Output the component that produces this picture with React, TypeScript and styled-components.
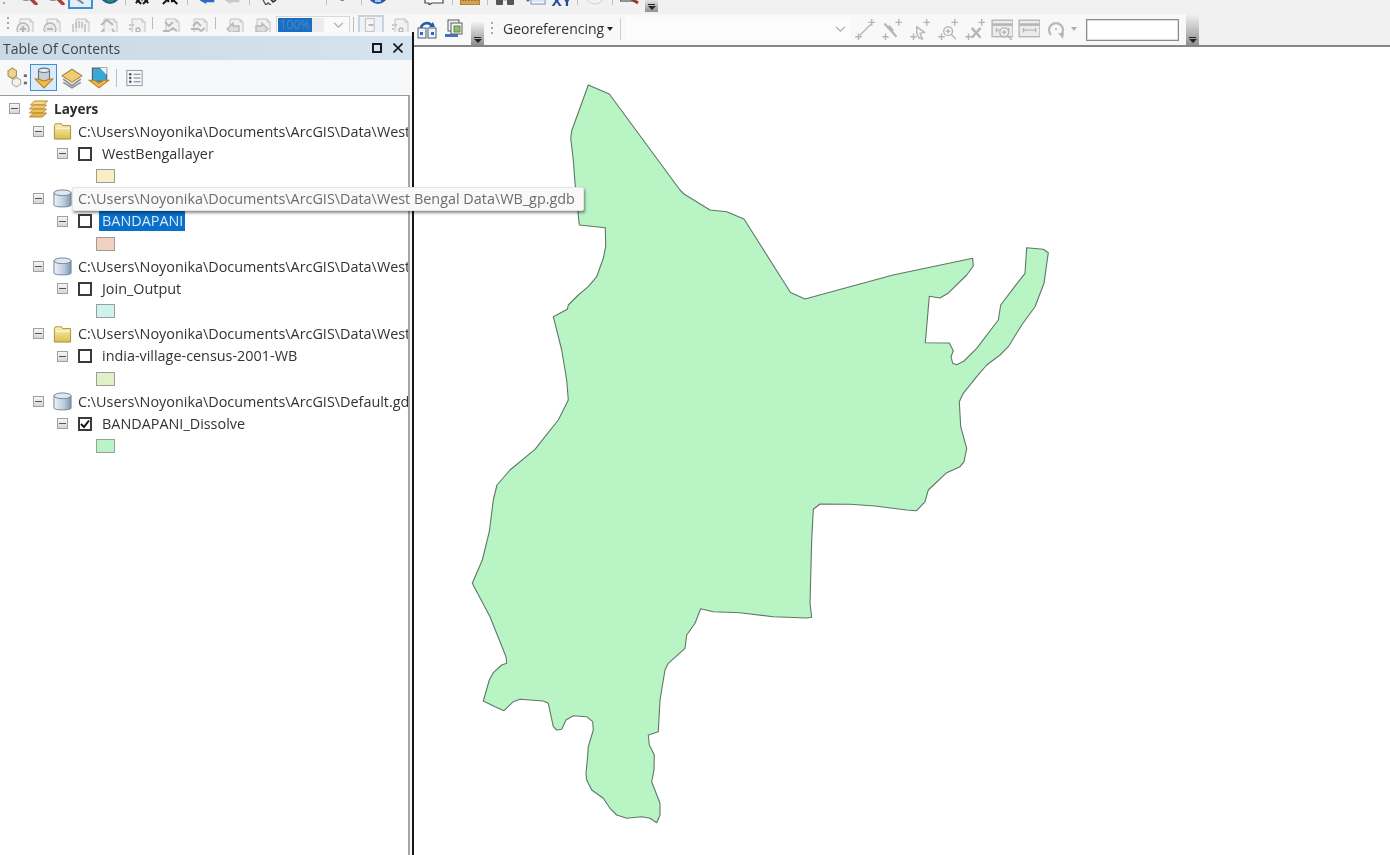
import React from 'react';
import styled, { createGlobalStyle } from 'styled-components';

const GlobalStyle = createGlobalStyle`
  html, body { margin: 0; padding: 0; background: #fff; }
  body { font-family: "Open Sans", "Noto Sans", sans-serif; }
`;

const Page = styled.div`
  position: relative;
  width: 1390px;
  height: 855px;
  overflow: hidden;
  display: flex;
  flex-direction: column;
  background: #fff;
  filter: blur(0.5px);
`;

const TopStrip = styled.div`
  height: 14px;
  flex: none;
  background: #f1f1f1;
  display: flex;
  align-items: flex-end;
  padding-bottom: 9px;
  box-sizing: border-box;
  overflow: hidden;
`;

const Slot = styled.div<{ $w: number; $after?: number; $drop?: number; $before?: number }>`
  width: ${p => p.$w}px;
  margin-left: ${p => p.$before ?? 0}px;
  margin-right: ${p => p.$after ?? 0}px;
  margin-bottom: ${p => -(p.$drop ?? 0)}px;
  flex: none;
  display: flex;
  justify-content: center;
  align-items: flex-end;
`;

const HandleSlot = styled(Slot)`
  align-self: flex-end;
`;

const Ico = styled.svg.attrs({ viewBox: '0 0 20 20' })<{ $w?: number; $h?: number }>`
  width: ${p => p.$w ?? 20}px;
  height: ${p => p.$h ?? 20}px;
  flex: none;
  display: block;
`;

const ActiveTool = styled.div`
  width: 25px;
  height: 24px;
  box-sizing: border-box;
  border: 2px solid #3f8fd8;
  background: #e2eefa;
  display: flex;
  align-items: flex-end;
  justify-content: center;
`;

const Sep = styled.div<{ $h?: number; $c?: string }>`
  width: 1px;
  height: ${p => p.$h ?? 20}px;
  background: ${p => p.$c ?? '#bdbdbd'};
  flex: none;
`;

const Handle = styled.div<{ $h: number }>`
  width: 13px;
  height: ${p => p.$h}px;
  flex: none;
  background: linear-gradient(#f2f2f2, #c6c6c6 45%, #8f8f8f);
  display: flex;
  flex-direction: column;
  align-items: center;
  justify-content: flex-end;
  padding-bottom: 2px;
  box-sizing: border-box;
  gap: 1px;
`;
const HandleBar = styled.div`
  width: 7px;
  height: 1px;
  background: #222;
`;
const HandleArrow = styled.div`
  width: 0;
  height: 0;
  border-left: 4px solid transparent;
  border-right: 4px solid transparent;
  border-top: 4px solid #222;
`;

const Grip = styled.div<{ $h?: number }>`
  width: 2px;
  height: ${p => p.$h ?? 14}px;
  flex: none;
  background: repeating-linear-gradient(#a9a9a9 0 2px, transparent 2px 5px);
`;

const Workspace = styled.div`
  flex: 1;
  min-height: 0;
  display: flex;
`;

const LeftColumn = styled.div`
  width: 414px;
  flex: none;
  display: flex;
  flex-direction: column;
  background: #f6f6f6;
`;

const ToolClip = styled.div`
  height: 18px;
  flex: none;
  overflow: hidden;
  display: flex;
  align-items: flex-start;
  padding: 3px 0 0 7px;
  box-sizing: border-box;
  background: #f7f7f7;
`;

const ZoomCombo = styled.div`
  width: 74px;
  height: 18px;
  flex: none;
  box-sizing: border-box;
  border: 1px solid #d8d8d8;
  background: #fafafa;
  display: flex;
  align-items: center;
  padding: 1px;
  margin: -1px 3px 0 0;
`;
const ZoomValue = styled.div`
  width: 34px;
  height: 14px;
  background: #1a6fc4;
  color: #4a88c4;
  font-size: 12px;
  line-height: 14px;
  text-align: center;
`;
const ZoomRest = styled.div`
  width: 12px;
  height: 14px;
  background: #ececec;
`;
const Chevron = styled.svg.attrs({ viewBox: '0 0 12 8' })`
  width: 11px;
  height: 7px;
  margin-left: auto;
  margin-right: 4px;
  flex: none;
`;
const LayoutToggle = styled.div`
  width: 26px;
  height: 20px;
  flex: none;
  box-sizing: border-box;
  border: 2px solid #c6d3e2;
  background: #eef1f5;
  display: flex;
  align-items: flex-start;
  justify-content: center;
  margin: -2px 0 0 0;
`;

const Panel = styled.div`
  flex: 1;
  min-height: 0;
  display: flex;
  flex-direction: column;
  border-right: 2px solid #151515;
  background: #f7f8fa;
`;
const TitleBar = styled.div`
  height: 24px;
  flex: none;
  margin-top: 4px;
  background: linear-gradient(90deg, #cbd8e6, #d5e2f0);
  display: flex;
  align-items: center;
  padding: 0 9px 0 3px;
  color: #3b444e;
  font-size: 14px;
`;
const TitleText = styled.span`
  flex: 1;
`;
const TitleButtons = styled.div`
  display: flex;
  gap: 11px;
  align-items: center;
`;
const MaxBox = styled.div`
  width: 10px;
  height: 10px;
  border: 2px solid #1a1a1a;
  box-sizing: border-box;
`;
const PanelTools = styled.div`
  height: 35px;
  flex: none;
  display: flex;
  align-items: center;
  padding-left: 7px;
  box-sizing: border-box;
`;
const ToolPress = styled.div`
  width: 27px;
  height: 27px;
  box-sizing: border-box;
  border: 1px solid #3f8fd8;
  background: #dcebf9;
  display: flex;
  align-items: center;
  justify-content: center;
  flex: none;
`;

const Tree = styled.div`
  flex: 1;
  min-height: 0;
  width: 410px;
  box-sizing: border-box;
  background: #fff;
  border-top: 1px solid #9c9c9c;
  border-right: 2px solid #a6a6a6;
  padding-top: 1.5px;
  overflow: hidden;
  color: #333;
  font-size: 14.4px;
`;
const Row = styled.div<{ $indent: number }>`
  height: 22.5px;
  display: flex;
  align-items: center;
  white-space: nowrap;
  padding-left: ${p => p.$indent}px;
`;
const Expander = styled.div`
  width: 11px;
  height: 11px;
  flex: none;
  box-sizing: border-box;
  border: 1px solid #a0a0a0;
  background: linear-gradient(#f6f6f6, #d6d6d6);
  display: flex;
  align-items: center;
  justify-content: center;
  &::after {
    content: '';
    width: 7px;
    height: 1px;
    background: #555;
  }
`;
const NodeIcon = styled.div`
  width: 20px;
  flex: none;
  margin-left: 8px;
  display: flex;
  justify-content: center;
`;
const PathLabel = styled.span`
  margin-left: 6px;
`;
const RootLabel = styled.span`
  margin-left: 6px;
  font-weight: 700;
  color: #2b2b2b;
  font-size: 13.5px;
`;
const Check = styled.div`
  width: 14px;
  height: 14px;
  flex: none;
  margin-left: 10px;
  box-sizing: border-box;
  border: 2px solid #3a3a3a;
  background: #fff;
  display: flex;
  align-items: center;
  justify-content: center;
`;
const LayerLabel = styled.span<{ $selected?: boolean }>`
  margin-left: 7px;
  padding: 0 2px 0 3px;
  line-height: 20px;
  background: ${p => (p.$selected ? '#0a6fc9' : 'transparent')};
  color: ${p => (p.$selected ? '#d8eafa' : 'inherit')};
`;
const Swatch = styled.div<{ $c: string }>`
  width: 19px;
  height: 14px;
  box-sizing: border-box;
  border: 1px solid #9d9d9d;
  background: ${p => p.$c};
  flex: none;
`;

const RightColumn = styled.div`
  flex: 1;
  min-width: 0;
  display: flex;
  flex-direction: column;
`;
const GeoBar = styled.div`
  height: 33px;
  flex: none;
  background: #f1f1f1;
  border-bottom: 2px solid #868686;
  box-sizing: border-box;
  display: flex;
  align-items: flex-end;
`;
const GeoInner = styled.div`
  height: 31px;
  flex: none;
  box-sizing: border-box;
  background: #f8f8f8;
  display: flex;
  align-items: center;
  padding: 0 0 2px 3px;
`;
const MenuLabel = styled.span`
  color: #333;
  font-size: 14px;
  margin: 0 3px 0 10px;
  flex: none;
`;
const MenuCaret = styled.div`
  width: 0;
  height: 0;
  border-left: 3px solid transparent;
  border-right: 3px solid transparent;
  border-top: 4px solid #222;
  flex: none;
  margin-right: 7px;
`;
const GeoCombo = styled.div`
  width: 224px;
  height: 24px;
  flex: none;
  box-sizing: border-box;
  background: #fcfcfc;
  display: flex;
  align-items: center;
  margin: 1px 3px 0 5px;
`;
const ScaleCaret = styled.div`
  width: 0;
  height: 0;
  border-left: 3px solid transparent;
  border-right: 3px solid transparent;
  border-top: 4px solid #aaa;
  flex: none;
  margin: 0 9px 0 5px;
`;
const ScaleInput = styled.div`
  width: 93px;
  height: 22px;
  flex: none;
  box-sizing: border-box;
  border: 1px solid #8a8a8a;
  box-shadow: inset 0 0 0 0.5px #bbb;
  background: #fff;
  margin: 3px 7px 0 0;
`;

const MapView = styled.div`
  flex: 1;
  min-height: 0;
  background: #fff;
`;
const MapSvg = styled.svg`
  display: block;
  width: 976px;
  height: 808px;
`;

const Tooltip = styled.div`
  position: absolute;
  left: 72px;
  top: 187px;
  width: 512px;
  height: 24px;
  box-sizing: border-box;
  padding-left: 5px;
  background: #f9f9f9;
  border: 1px solid #e4e4e4;
  box-shadow: 1px 2px 3px rgba(0, 0, 0, 0.45);
  border-radius: 2px;
  color: #6c6c6c;
  font-size: 14.4px;
  line-height: 21px;
  white-space: nowrap;
`;

/* ---------- icons ---------- */
const Magnifier = () => (
  <Ico>
    <circle cx="8" cy="8" r="7" fill="#eee" stroke="#8a8a8a" strokeWidth="2" />
    <path d="M13 14l5 5" stroke="#a8423a" strokeWidth="3.4" strokeLinecap="round" />
  </Ico>
);
const Globe = () => (
  <Ico>
    <circle cx="10" cy="9" r="10" fill="#1b5f9e" />
    <path d="M5 13c3-2 7-2 10 0l-2 4H8z" fill="#2f8b55" />
  </Ico>
);
const BlackIn = ({ flip }: { flip?: boolean }) => (
  <Ico $w={18} $h={20}>
    <path d={flip ? 'M1 20l6-6M3 14h4v4M17 20l-6-6M11 18v-4h4' : 'M2 14l6 6M2 19l5-5M16 14l-6 6M11 14l5 5'} stroke="#161616" strokeWidth="2.2" fill="none" />
    <path d={flip ? 'M7 13h4v1H7z' : 'M8 16h2v1H8z'} fill="#161616" />
  </Ico>
);
const BlueArrow = ({ faded }: { faded?: boolean }) => (
  <Ico $w={18} $h={20}>
    <path d="M1 16l7-7v5h9v4H8v2z" fill={faded ? '#c9c9c9' : '#2a6cc0'} />
  </Ico>
);
const CursorDoc = () => (
  <Ico>
    <path d="M3 12h8l4 5 3-2" stroke="#333" strokeWidth="1.6" fill="none" />
    <path d="M5 15l3 5 2-2 3 2" stroke="#555" strokeWidth="1.4" fill="#fff" />
  </Ico>
);
const FaintBar = () => (
  <Ico $w={14} $h={20}>
    <path d="M0 15.5h14" stroke="#c6c6c6" strokeWidth="1.4" />
  </Ico>
);
const BlackPointer = () => (
  <Ico $w={11} $h={20}>
    <path d="M1 8l9 8-3 1 2 3H3z" fill="#111" />
  </Ico>
);
const InfoDisc = () => (
  <Ico>
    <circle cx="10" cy="9" r="10" fill="#1e5fb4" />
    <path d="M7 16h6" stroke="#cfe2f7" strokeWidth="1.6" />
  </Ico>
);
const FaintSlash = () => (
  <Ico $w={9} $h={20}>
    <path d="M8 13l-6 7" stroke="#cfcfcf" strokeWidth="1.6" />
  </Ico>
);
const Bubble = () => (
  <Ico>
    <path d="M1 10h18v8H8l-3 2v-2H1z" fill="#fafafa" stroke="#444" strokeWidth="1.2" />
  </Ico>
);
const Ruler = () => (
  <Ico>
    <rect x="0" y="12" width="20" height="8" fill="#d3a24a" stroke="#8a6a2a" />
    <path d="M3 12v4M6 12v4M9 12v4M12 12v4M15 12v4M18 12v4" stroke="#6d5120" />
  </Ico>
);
const Binoculars = () => (
  <Ico>
    <rect x="1" y="13" width="7" height="7" rx="1" fill="#555" />
    <rect x="12" y="13" width="7" height="7" rx="1" fill="#555" />
    <rect x="8.5" y="14" width="3" height="1.4" fill="#777" />
  </Ico>
);
const TableXY = () => (
  <Ico $w={22}>
    <rect x="6" y="12" width="14" height="7" fill="#fff" stroke="#6f8eb4" />
    <circle cx="3" cy="15" r="1.6" fill="#2a6cc0" />
    <path d="M6 16h14" stroke="#b9c9dc" />
  </Ico>
);
const XYLabel = styled.span`
  font-size: 15px;
  line-height: 20px;
  font-weight: 700;
  color: #1f4f9c;
  height: 20px;
  letter-spacing: 0.5px;
  margin-bottom: -5px;
`;
const FaintDish = () => (
  <Ico>
    <ellipse cx="10" cy="11" rx="9" ry="8" fill="#f2f2f2" stroke="#cfcfcf" />
  </Ico>
);
const RedTool = () => (
  <Ico>
    <path d="M0 12h14v4H0z" fill="#f5f5f5" stroke="#333" />
    <path d="M10 13l8 5" stroke="#9a3a2a" strokeWidth="3" />
  </Ico>
);

const FadedPage = ({ children }: { children?: React.ReactNode }) => (
  <Ico>
    <path d="M5 2h10l3 3v15H5z" fill="#f1f1f1" stroke="#c2c2c2" />
    <path d="M15 2v3h3" fill="none" stroke="#c2c2c2" />
    {children}
  </Ico>
);
const G = styled.g`
  fill: none;
  stroke: #b6b6b6;
  stroke-width: 1.3;
`;
const PageZoomIn = () => (
  <FadedPage>
    <G>
      <circle cx="8" cy="12" r="6" fill="#e9e9e9" />
      <path d="M5 12h6M8 9v6" strokeWidth="2" />
    </G>
  </FadedPage>
);
const PageZoomOut = () => (
  <FadedPage>
    <G>
      <circle cx="8" cy="12" r="6" fill="#e9e9e9" />
      <path d="M5 12h6" strokeWidth="2" />
    </G>
  </FadedPage>
);
const PageHand = () => (
  <FadedPage>
    <G>
      <path d="M2 12V7M5 11V5M8 11V4M11 11V5M14 12V7M2 12c0 5 3 7 7 7s5-3 5-7" />
    </G>
  </FadedPage>
);
const PageArrows = () => (
  <FadedPage>
    <G>
      <path d="M2 8l6-5 6 5M5 12l-3 4h6M13 12l3 4h-6" strokeWidth="1.8" />
    </G>
  </FadedPage>
);
const PageDashed = () => (
  <FadedPage>
    <G>
      <path d="M2 8h5M2 12h3M2 16h3" strokeDasharray="2 1" />
      <circle cx="11" cy="13" r="2" />
    </G>
  </FadedPage>
);
const PageIn = () => (
  <FadedPage>
    <G>
      <path d="M4 5l4 4 4-4M8 14l4-3 4 3M2 14h6" strokeWidth="1.8" />
    </G>
  </FadedPage>
);
const PageOut = () => (
  <FadedPage>
    <G>
      <path d="M4 9l4-4 4 4M8 11l4 3 4-3M2 12h6" strokeWidth="1.8" />
    </G>
  </FadedPage>
);
const PageBack = () => (
  <FadedPage>
    <G>
      <path d="M2 12l6-6v3h6v6H8v3z" fill="#dcdcdc" />
    </G>
  </FadedPage>
);
const PageForward = () => (
  <FadedPage>
    <G>
      <path d="M16 12l-6-6v3H4v6h6v3z" fill="#dcdcdc" />
    </G>
  </FadedPage>
);

const RefreshDocs = () => (
  <Ico>
    <path d="M4 9a6 6 0 0 1 11-2" fill="none" stroke="#1f5fa8" strokeWidth="2.6" />
    <path d="M12 8h6l-2-5z" fill="#1f5fa8" />
    <rect x="1" y="9" width="8" height="10" fill="#eef3f8" stroke="#4d5f73" />
    <rect x="11" y="9" width="8" height="10" fill="#eef3f8" stroke="#4d5f73" />
    <rect x="3" y="13" width="3" height="3" fill="#2a6cc0" />
    <rect x="14" y="13" width="3" height="3" fill="#2a6cc0" />
  </Ico>
);
const DataFrames = () => (
  <Ico>
    <rect x="4" y="1" width="11" height="11" fill="#f2f2f2" stroke="#5c5c5c" />
    <rect x="7" y="4" width="11" height="11" fill="#f7f7f7" stroke="#5c5c5c" />
    <rect x="10" y="7" width="6" height="6" fill="#8cc06a" stroke="#5f8a45" />
    <rect x="1" y="15" width="13" height="3" fill="#3f72b8" />
  </Ico>
);

const GeoPlus = ({ children }: { children?: React.ReactNode }) => (
  <Ico $w={22} $h={22}>
    <G>
      <path d="M2 17h6M5 14v6M14 4h6M17 1v6" />
      {children}
    </G>
  </Ico>
);
const GeoTable = ({ lens }: { lens?: boolean }) => (
  <Ico $w={22} $h={22}>
    <G>
      <rect x="1" y="2" width="19" height="15" fill="#ececec" />
      <path d="M1 6h19" strokeWidth="2.4" />
      <path d="M5 11h11M5 9v4M16 9v4" />
      {lens && <circle cx="12" cy="13" r="4" fill="#f2f2f2" />}
      {lens && <path d="M15 16l4 4M10 13h4M12 11v4" />}
    </G>
  </Ico>
);
const GeoRotate = () => (
  <Ico $w={20} $h={22}>
    <path d="M5 16a7 7 0 1 1 10 0" fill="none" stroke="#b8b8b8" strokeWidth="2.2" />
    <path d="M12 14l6 0 -1 6z" fill="#b8b8b8" />
    <circle cx="10" cy="10" r="1" fill="#a8a8a8" />
  </Ico>
);

const LayersIcon = () => (
  <Ico $w={21} $h={20}>
    <path d="M6 2h13l-4 4H2z" fill="#f3d98f" stroke="#b98a2e" />
    <path d="M5 6h13l-4 4H1z" fill="#efcb74" stroke="#b98a2e" />
    <path d="M5 10h13l-4 4H1z" fill="#ecc260" stroke="#b98a2e" />
    <path d="M5 14h13l-4 4H1z" fill="#e6b64e" stroke="#b98a2e" />
  </Ico>
);
const FolderIcon = () => (
  <Ico $w={19} $h={18}>
    <defs>
      <linearGradient id="folderFill" x1="0" y1="0" x2="0" y2="1">
        <stop offset="0" stopColor="#fdf3b8" />
        <stop offset="1" stopColor="#d9bd50" />
      </linearGradient>
    </defs>
    <path d="M1 4l1-2h7l1 2h9v15H1z" fill="url(#folderFill)" stroke="#a08a30" />
    <path d="M2 7h16" stroke="#fff8d8" />
  </Ico>
);
const CylinderIcon = () => (
  <Ico $w={19} $h={19}>
    <defs>
      <linearGradient id="cylFill" x1="0" y1="0" x2="1" y2="0">
        <stop offset="0" stopColor="#eef3f8" />
        <stop offset="0.6" stopColor="#b9cbdd" />
        <stop offset="1" stopColor="#7f95ac" />
      </linearGradient>
    </defs>
    <path d="M1 4v13c0 2.500 18 2.500 18 0V4z" fill="url(#cylFill)" stroke="#6f8398" />
    <ellipse cx="10" cy="4" rx="9" ry="3" fill="#dfe8f1" stroke="#6f8398" />
  </Ico>
);
const CheckMark = () => (
  <Ico $w={10} $h={10}>
    <path d="M2 10l6 6L18 3" fill="none" stroke="#111" strokeWidth="4" />
  </Ico>
);
const CloseMark = () => (
  <Ico $w={10} $h={10}>
    <path d="M1 1l18 18M19 1L1 19" stroke="#1a1a1a" strokeWidth="3.4" />
  </Ico>
);

const ListByDrawing = () => (
  <Ico $w={21} $h={21}>
    <path d="M5 1l4 2.500v5L5 11 1 8.500v-5z" fill="#efd394" stroke="#b08a45" />
    <path d="M9 10l4 2.500v4L9 19l-4-2.500v-4z" fill="#f6f1e2" stroke="#a9a9a9" />
    <rect x="16" y="7" width="3" height="2.500" fill="#6b6b6b" />
    <rect x="16" y="14" width="3" height="2.500" fill="#6b6b6b" />
  </Ico>
);
const ListBySource = () => (
  <Ico $w={22} $h={24}>
    <path d="M5 3v9c0 2 10 2 10 0V3z" fill="#c7cfd8" stroke="#6a7684" />
    <ellipse cx="10" cy="3" rx="5" ry="2" fill="#e8edf2" stroke="#6a7684" />
    <path d="M2 11h4c1 2 7 2 8 0h4l-8 8z" fill="#efb94e" stroke="#b5832a" />
  </Ico>
);
const ListByVisibility = () => (
  <Ico $w={22} $h={22}>
    <path d="M10 2l9 6-9 6-9-6z" fill="#f0cd72" stroke="#a88a3f" />
    <path d="M2 11l8 6 8-6" fill="none" stroke="#8d8d8d" strokeWidth="1.6" />
    <path d="M2 14l8 5 8-5" fill="none" stroke="#8d8d8d" strokeWidth="1.4" />
  </Ico>
);
const ListBySelection = () => (
  <Ico $w={22} $h={22}>
    <rect x="4" y="1" width="13" height="12" fill="#35a9d8" stroke="#555" />
    <path d="M11 1h6v6z" fill="#f6f6f6" />
    <path d="M1 12h5l4 3 4-3h5l-9 7z" fill="#efb94e" stroke="#b5832a" />
  </Ico>
);
const OptionsList = () => (
  <Ico $w={17} $h={18}>
    <rect x="1" y="1" width="18" height="18" fill="#f4f7fb" stroke="#7f8b98" />
    <circle cx="5" cy="5.500" r="1.500" fill="#555" />
    <circle cx="5" cy="10" r="1.500" fill="#555" />
    <circle cx="5" cy="14.500" r="1.500" fill="#555" />
    <path d="M9 5.500h8M9 10h8M9 14.500h8" stroke="#7b7b7b" strokeWidth="1.2" />
  </Ico>
);

const groups: { kind: 'folder' | 'db'; path: string; name: string; swatch: string; checked?: boolean; selected?: boolean }[] = [
  { kind: 'folder', path: 'C:\\Users\\Noyonika\\Documents\\ArcGIS\\Data\\West Bengal Data', name: 'WestBengallayer', swatch: '#faeec3' },
  { kind: 'db', path: 'C:\\Users\\Noyonika\\Documents\\ArcGIS\\Data\\West Bengal Data\\WB_gp.gdb', name: 'BANDAPANI', swatch: '#f2d0c2', selected: true },
  { kind: 'db', path: 'C:\\Users\\Noyonika\\Documents\\ArcGIS\\Data\\West Bengal Data\\Join.gdb', name: 'Join_Output', swatch: '#cdf3ef' },
  { kind: 'folder', path: 'C:\\Users\\Noyonika\\Documents\\ArcGIS\\Data\\West Bengal Data', name: 'india-village-census-2001-WB', swatch: '#e0f1c8' },
  { kind: 'db', path: 'C:\\Users\\Noyonika\\Documents\\ArcGIS\\Default.gdb', name: 'BANDAPANI_Dissolve', swatch: '#b9f4c5', checked: true },
];

const outline =
  '588.3,85 609.3,94 680,190 684,194 710,210 726.7,211.7 744,219 790.5,292.5 805,299 893,275 972.7,258.3 973.3,266 966.7,275 948,293.3 940,298 929.3,296.3 925.3,342.7 949.3,343 953.3,350.7 951,356.7 952.7,363.3 956.7,364.7 964,361 976.7,348.3 998.3,320 1000.7,305 1013.3,288.3 1025,273.3 1026.7,247.7 1043.3,249.3 1048.3,252.7 1044,283.3 1035,306.7 1021.7,325 1008.3,346.7 1000,355 986.7,365 976.7,376.7 963.3,393.3 959.3,401.7 960.7,426.7 966.7,448.3 964,461.7 960,466.7 946.7,472.7 928.3,490 925,501.7 916.7,510.7 906.7,510 875,506 850,504.3 820,504 813.3,509.3 811.7,540 810,603.3 811.7,617.3 806.7,618 773.3,616.7 740,612.7 713.3,611.7 700.7,608.7 695,623.3 686.7,635 685,648.3 668.3,663.3 665,670 660,700 658.3,731.7 648.3,735 649.3,745 654.3,755 654,770 651.7,781.7 660,803.3 660,815 656.7,822.7 650,818.3 641.7,816.7 626.7,818.3 616.7,815 610,808.3 603.3,798.3 591.7,790 586.7,780 586,773.3 587.3,760 588.3,746.7 593.3,730 592.7,721.7 586.7,716.7 573.3,715.7 566,720 561.7,729.3 556.7,730 553.3,726.7 548.3,703.3 543.3,701 520,699.3 513.3,701.7 504,710.7 495,706.7 483.3,701 489.3,680 493.3,672.7 501.7,665 506.7,663.3 506,656.7 490,616.7 472.3,583.3 482.3,560 489.3,531.7 493.3,500 497,485 510,470 535,449.3 545,436.7 558.3,420 568.3,400 566.7,380 561.7,350 553.3,316.7 567.3,309.3 568.3,305 578.3,295 588.3,286.7 596.7,276.7 603.3,258.3 605.7,246.7 605.3,227.7 579.3,225 575,183 573.3,160 570.7,138.3 571.7,130.7';

export default function App() {
  return (
    <>
      <GlobalStyle />
      <Page>
        <TopStrip>
          <Slot $w={8} $after={12}><Grip $h={3} /></Slot>
          <Slot $w={16} $after={11}><Magnifier /></Slot>
          <Slot $w={16} $after={5}><Magnifier /></Slot>
          <Slot $w={25} $after={8} $drop={4}>
            <ActiveTool>
              <Ico $w={18} $h={18}><path d="M2 8l11 8M3 10l9 6" stroke="#7f8a96" strokeWidth="1.6" /></Ico>
            </ActiveTool>
          </Slot>
          <Slot $w={18} $after={6}><Globe /></Slot>
          <Slot $w={1} $after={8}><Sep $h={10} /></Slot>
          <Slot $w={18} $after={10}><BlackIn /></Slot>
          <Slot $w={18} $after={7}><BlackIn flip /></Slot>
          <Slot $w={1} $after={11}><Sep $h={10} /></Slot>
          <Slot $w={18} $after={9}><BlueArrow /></Slot>
          <Slot $w={14} $after={9}><BlueArrow faded /></Slot>
          <Slot $w={1} $after={9}><Sep $h={10} /></Slot>
          <Slot $w={18} $after={25}><CursorDoc /></Slot>
          <Slot $w={14} $after={10}><FaintBar /></Slot>
          <Slot $w={1} $after={12}><Sep $h={10} /></Slot>
          <Slot $w={11} $after={11}><BlackPointer /></Slot>
          <Slot $w={1} $after={7}><Sep $h={10} /></Slot>
          <Slot $w={18} $after={12}><InfoDisc /></Slot>
          <Slot $w={9} $after={17}><FaintSlash /></Slot>
          <Slot $w={18} $after={9}><Bubble /></Slot>
          <Slot $w={1} $after={7}><Sep $h={10} /></Slot>
          <Slot $w={20} $after={7}><Ruler /></Slot>
          <Slot $w={1} $after={7}><Sep $h={10} /></Slot>
          <Slot $w={20} $after={9}><Binoculars /></Slot>
          <Slot $w={22} $after={6}><TableXY /></Slot>
          <Slot $w={20} $after={5}><XYLabel>XY</XYLabel></Slot>
          <Slot $w={1} $after={7}><Sep $h={10} /></Slot>
          <Slot $w={20} $after={7}><FaintDish /></Slot>
          <Slot $w={1} $after={7}><Sep $h={10} /></Slot>
          <Slot $w={20} $after={5}><RedTool /></Slot>
          <Slot $w={13} $drop={7}><Handle $h={14}><HandleBar /><HandleArrow /></Handle></Slot>
        </TopStrip>
        <Workspace>
          <LeftColumn>
            <ToolClip>
              <Grip />
              <Slot $w={22} $after={6} $before={5}><PageZoomIn /></Slot>
              <Slot $w={20} $after={9}><PageZoomOut /></Slot>
              <Slot $w={20} $after={8}><PageHand /></Slot>
              <Slot $w={20} $after={8}><PageArrows /></Slot>
              <Slot $w={20} $after={5}><PageDashed /></Slot>
              <Sep $h={12} />
              <Slot $w={20} $after={8} $before={8}><PageIn /></Slot>
              <Slot $w={20} $after={6}><PageOut /></Slot>
              <Sep $h={12} />
              <Slot $w={20} $after={7} $before={9}><PageBack /></Slot>
              <Slot $w={20} $after={4}><PageForward /></Slot>
              <ZoomCombo>
                <ZoomValue>100%</ZoomValue>
                <ZoomRest />
                <Chevron><path d="M1 1l5 5 5-5" fill="none" stroke="#aaa" strokeWidth="1.4" /></Chevron>
              </ZoomCombo>
              <Sep $h={15} />
              <Slot $w={26} $after={6} $before={4}>
                <LayoutToggle>
                  <Ico $w={16} $h={16}><path d="M3 2h11v16H3z" fill="#f5f5f5" stroke="#b5b5b5" /><path d="M7 10h6" stroke="#aaa" strokeWidth="2" /></Ico>
                </LayoutToggle>
              </Slot>
              <Slot $w={20}><PageDashed /></Slot>
            </ToolClip>
            <Panel>
              <TitleBar>
                <TitleText>Table Of Contents</TitleText>
                <TitleButtons>
                  <MaxBox />
                  <CloseMark />
                </TitleButtons>
              </TitleBar>
              <PanelTools>
                <Slot $w={21} $after={2}><ListByDrawing /></Slot>
                <ToolPress><ListBySource /></ToolPress>
                <Slot $w={22} $after={5} $before={4}><ListByVisibility /></Slot>
                <Slot $w={22} $after={6}><ListBySelection /></Slot>
                <Sep $h={18} />
                <Slot $w={17} $before={9}><OptionsList /></Slot>
              </PanelTools>
              <Tree>
                <Row $indent={9}>
                  <Expander />
                  <NodeIcon><LayersIcon /></NodeIcon>
                  <RootLabel>Layers</RootLabel>
                </Row>
                {groups.map(g => (
                  <React.Fragment key={g.name}>
                    <Row $indent={33}>
                      <Expander />
                      <NodeIcon>{g.kind === 'folder' ? <FolderIcon /> : <CylinderIcon />}</NodeIcon>
                      <PathLabel>{g.path}</PathLabel>
                    </Row>
                    <Row $indent={57}>
                      <Expander />
                      <Check>{g.checked && <CheckMark />}</Check>
                      <LayerLabel $selected={g.selected}>{g.name}</LayerLabel>
                    </Row>
                    <Row $indent={96}>
                      <Swatch $c={g.swatch} />
                    </Row>
                  </React.Fragment>
                ))}
              </Tree>
            </Panel>
          </LeftColumn>
          <RightColumn>
            <GeoBar>
              <GeoInner>
                <Slot $w={20} $after={7}><RefreshDocs /></Slot>
                <Slot $w={20} $after={8}><DataFrames /></Slot>
                <HandleSlot $w={11} $after={8} $drop={2}><Handle $h={23}><HandleBar /><HandleArrow /></Handle></HandleSlot>
                <Grip />
                <MenuLabel>Georeferencing</MenuLabel>
                <MenuCaret />
                <Sep $h={22} $c="#cfcfcf" />
                <GeoCombo>
                  <Chevron><path d="M1 1l5 5 5-5" fill="none" stroke="#aaa" strokeWidth="1.4" /></Chevron>
                </GeoCombo>
                <Slot $w={22} $after={5}><GeoPlus><path d="M6 16l10-10" /></GeoPlus></Slot>
                <Slot $w={22} $after={6}><GeoPlus><path d="M4 5l11 12M8 7l4 5" strokeWidth="2" /></GeoPlus></Slot>
                <Slot $w={22} $after={6}><GeoPlus><path d="M8 8l7 5-4 1 2 5-3-1-2-4z" /></GeoPlus></Slot>
                <Slot $w={22} $after={5}><GeoPlus><circle cx="11" cy="12" r="4" /><path d="M14 15l4 4M9 12h4M11 10v4" /></GeoPlus></Slot>
                <Slot $w={22} $after={6}><GeoPlus><path d="M8 9l8 9M16 9l-8 9" strokeWidth="2.2" /></GeoPlus></Slot>
                <Slot $w={22} $after={5}><GeoTable lens /></Slot>
                <Slot $w={22} $after={6}><GeoTable /></Slot>
                <Slot $w={20}><GeoRotate /></Slot>
                <ScaleCaret />
                <ScaleInput />
                <HandleSlot $w={13} $drop={2}><Handle $h={31}><HandleBar /><HandleArrow /></Handle></HandleSlot>
              </GeoInner>
            </GeoBar>
            <MapView>
              <MapSvg viewBox="414 47 976 808">
                <polygon points={outline} fill="#b9f4c5" stroke="#5f7767" strokeWidth="1.1" strokeLinejoin="round" />
              </MapSvg>
            </MapView>
          </RightColumn>
        </Workspace>
        <Tooltip>C:\Users\Noyonika\Documents\ArcGIS\Data\West Bengal Data\WB_gp.gdb</Tooltip>
      </Page>
    </>
  );
}
